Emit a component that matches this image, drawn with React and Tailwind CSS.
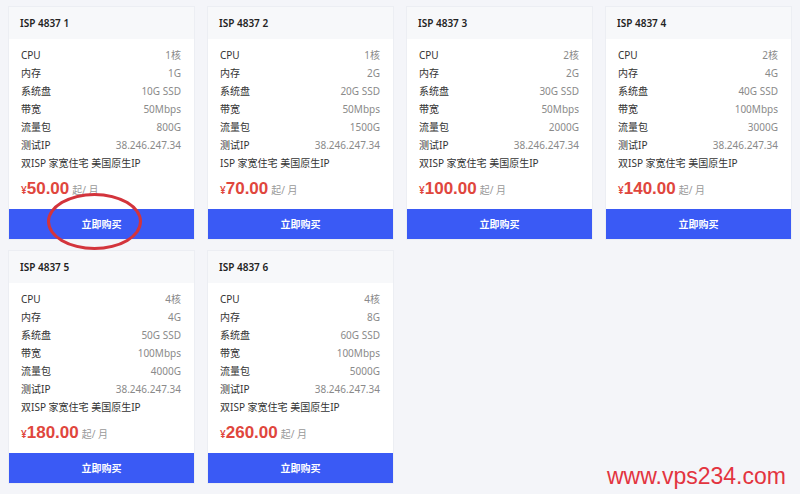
import React from "react";

const plans = [
  { n: 1, cpu: "1核", mem: "1G", disk: "10G SSD", bw: "50Mbps", traffic: "800G", tag: "双ISP 家宽住宅 美国原生IP", price: "50.00" },
  { n: 2, cpu: "1核", mem: "2G", disk: "20G SSD", bw: "50Mbps", traffic: "1500G", tag: "ISP 家宽住宅 美国原生IP", price: "70.00" },
  { n: 3, cpu: "2核", mem: "2G", disk: "30G SSD", bw: "50Mbps", traffic: "2000G", tag: "双ISP 家宽住宅 美国原生IP", price: "100.00" },
  { n: 4, cpu: "2核", mem: "4G", disk: "40G SSD", bw: "100Mbps", traffic: "3000G", tag: "双ISP 家宽住宅 美国原生IP", price: "140.00" },
  { n: 5, cpu: "4核", mem: "4G", disk: "50G SSD", bw: "100Mbps", traffic: "4000G", tag: "双ISP 家宽住宅 美国原生IP", price: "180.00" },
  { n: 6, cpu: "4核", mem: "8G", disk: "60G SSD", bw: "100Mbps", traffic: "5000G", tag: "双ISP 家宽住宅 美国原生IP", price: "260.00" },
];

const font = { fontFamily: '"Noto Sans", "Noto Sans CJK SC", sans-serif' };

function Row({ label, value }) {
  return (
    <div className="flex h-[18px] items-center justify-between">
      <span className="text-[#333]">{label}</span>
      <span className="text-[#8a8a8a]">{value}</span>
    </div>
  );
}

function Card({ p }) {
  return (
    <div className="relative flex h-[234px] flex-col border border-[#eceef3] bg-white">
      <div className="flex h-[32px] items-center bg-[#f7f8fa] pl-[11px] text-[10px] font-semibold text-[#222]">
        ISP 4837 {p.n}
      </div>
      <div className="flex-1 pl-[12px] pr-[13px] pt-[7px] text-[10px]">
        <Row label="CPU" value={p.cpu} />
        <Row label="内存" value={p.mem} />
        <Row label="系统盘" value={p.disk} />
        <Row label="带宽" value={p.bw} />
        <Row label="流量包" value={p.traffic} />
        <Row label="测试IP" value={p.ip || "38.246.247.34"} />
        <div className="flex h-[18px] items-center text-[#333]">{p.tag}</div>
        <div className="mt-[5px] flex items-baseline">
          <span className="text-[10px] font-semibold text-[#e0463d]">¥</span>
          <span className="text-[17px] font-bold leading-[24px] text-[#e0463d]" style={{ fontFamily: '"Liberation Sans", Arial, sans-serif' }}>{p.price}</span>
          <span className="ml-[3px] text-[10px] text-[#999]">起/ 月</span>
        </div>
      </div>
      <button className="h-[30px] w-full bg-[#3a5af5] text-[10px] font-semibold text-white">立即购买</button>
    </div>
  );
}

export default function App() {
  return (
    <div className="relative h-[494px] w-[800px] overflow-hidden bg-[#f4f5f9]" style={font}>
      <div className="grid grid-cols-[repeat(4,187px)] gap-x-[12px] gap-y-[10px] pl-[8px] pt-[6px]">
        {plans.map((p) => (
          <Card key={p.n} p={p} />
        ))}
      </div>
      <div className="pointer-events-none absolute left-[47px] top-[193px] h-[57px] w-[95px] rounded-[50%] border-[3px] border-[#d3343c]" />
      <div
        className="absolute left-[607px] top-[462px] text-[23px] leading-[28px] text-[#e3343f]"
        style={{ fontFamily: '"Liberation Sans", Arial, sans-serif' }}
      >
        www.vps234.com
      </div>
    </div>
  );
}
